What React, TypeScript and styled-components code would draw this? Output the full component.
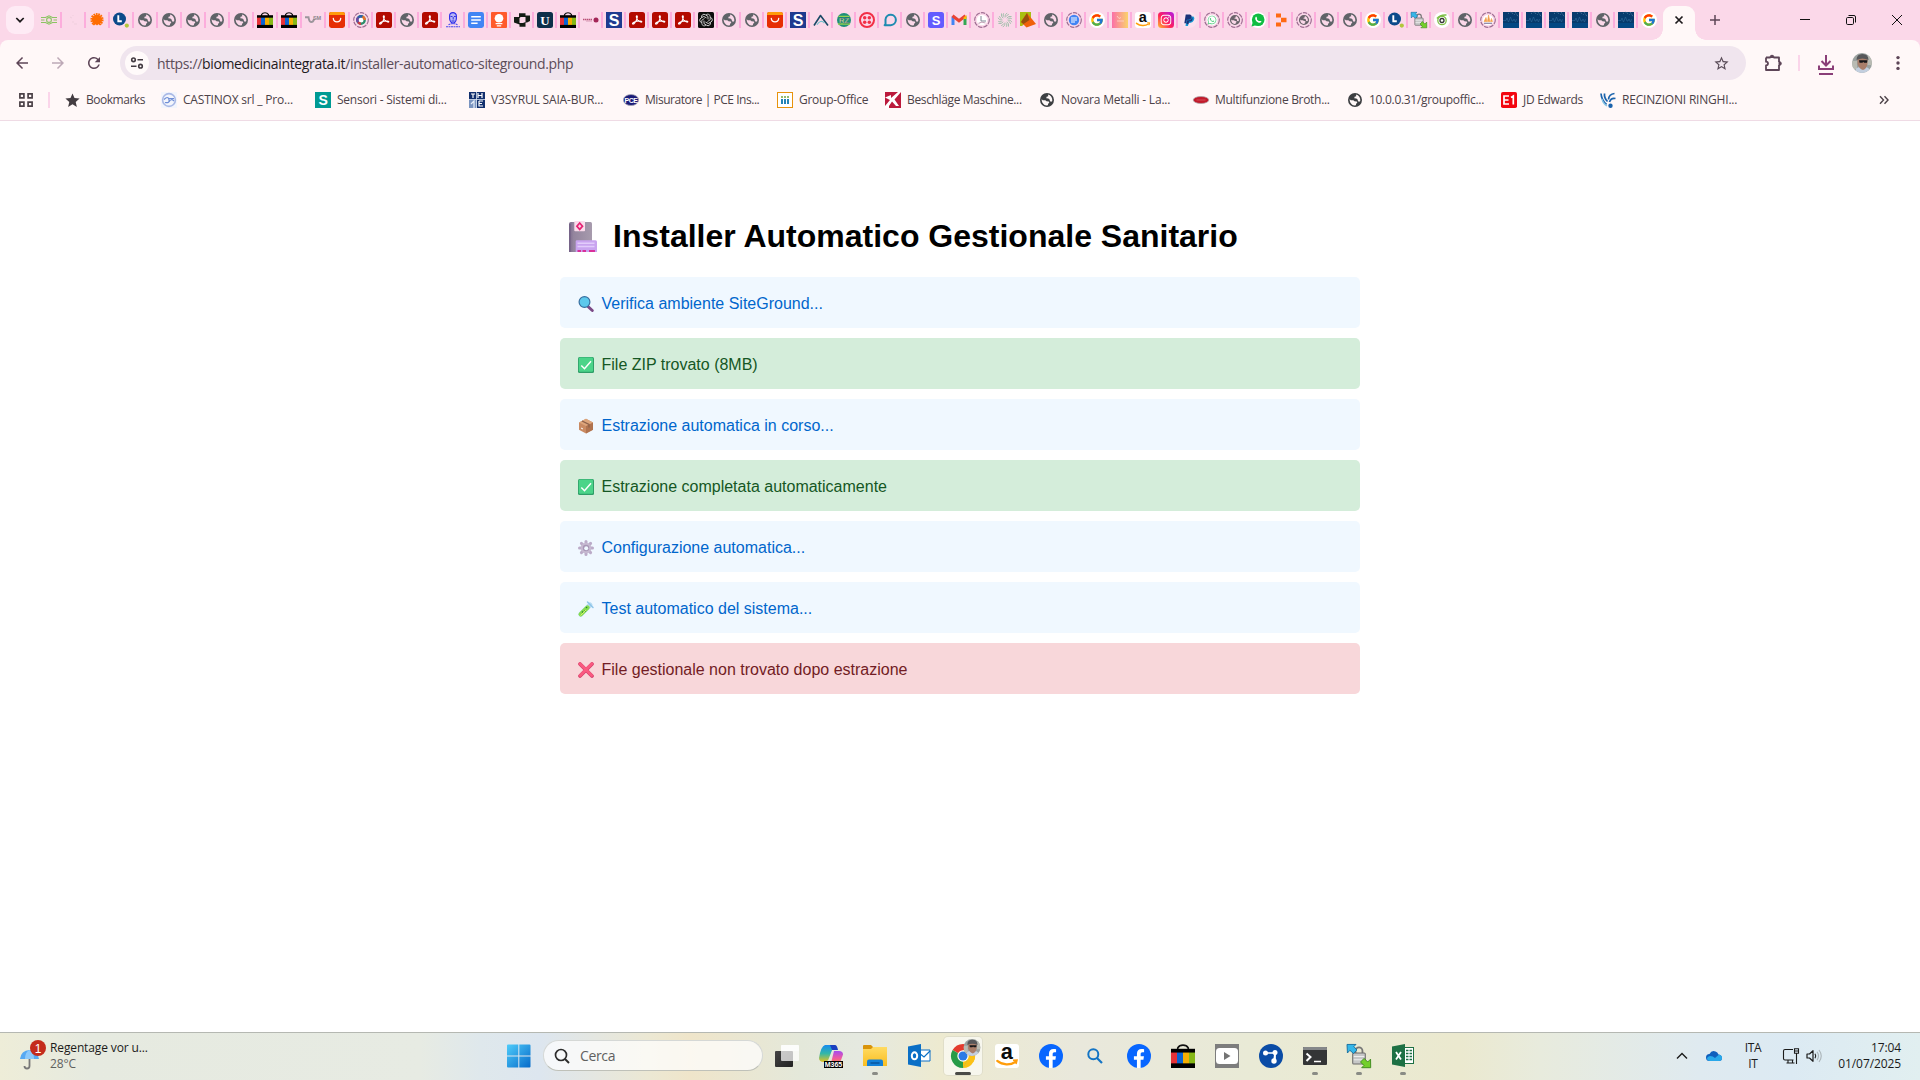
import React from "react";
import styled, { createGlobalStyle } from "styled-components";
import { FcGoogle } from "react-icons/fc";
import { FaFacebookF, FaInstagram, FaPaypal, FaWhatsapp } from "react-icons/fa";
import { MdArrowBack, MdArrowForward, MdRefresh, MdStar, MdStarBorder } from "react-icons/md";

const ui = '"Open Sans", "Noto Sans", sans-serif';

const Global = createGlobalStyle`
  * { box-sizing: border-box; }
  html, body { margin: 0; padding: 0; background: #fff; overflow: hidden; }
  svg { display: block; flex: none; overflow: visible; }
`;

const Screen = styled.div`
  width: 1920px;
  height: 1080px;
  display: flex;
  flex-direction: column;
  background: #fff;
  font-family: ${ui};
`;

/* ---------- browser chrome ---------- */

const TabStrip = styled.div`
  display: flex;
  height: 40px;
  background: #fbd8e9;
  padding-left: 6px;
`;

const TabSearch = styled.div`
  width: 28px;
  height: 28px;
  margin: 6px 4px 0 0;
  border-radius: 9px;
  background: #feebf5;
  display: flex;
  align-items: center;
  justify-content: center;
`;

const Tab = styled.div<{ $w: number; $last?: boolean }>`
  width: ${(p) => p.$w}px;
  height: 16px;
  margin-top: 12px;
  padding-left: 3px;
  border-right: ${(p) => (p.$last ? "0" : "2px solid #fcaddc")};
`;

const ActiveTab = styled.div`
  position: relative;
  width: 32px;
  height: 34px;
  margin: 6px 0 0 6px;
  border-radius: 9px 9px 0 0;
  background: #fff8f8;
  display: flex;
  align-items: center;
  justify-content: center;
  padding-bottom: 6px;
  &::before,
  &::after {
    content: "";
    position: absolute;
    bottom: 0;
    width: 11px;
    height: 11px;
  }
  &::before {
    right: 100%;
    background: radial-gradient(circle at 0 0, transparent 10.5px, #fff8f8 11px);
  }
  &::after {
    left: 100%;
    background: radial-gradient(circle at 100% 0, transparent 10.5px, #fff8f8 11px);
  }
`;

const NewTab = styled.div`
  margin: 14px 0 0 14px;
`;

const WindowButtons = styled.div`
  margin-left: auto;
  display: flex;
  height: 40px;
  align-items: center;
`;

const WindowButton = styled.div`
  width: 46px;
  display: flex;
  justify-content: center;
`;

const ToolbarBack = styled.div`
  background: #fbd8e9;
`;

const Toolbar = styled.div`
  height: 46px;
  background: #fff8f8;
  border-radius: 8px 8px 0 0;
  display: flex;
  align-items: center;
  padding: 0 16px 0 12px;
`;

const NavButton = styled.div<{ $color: string }>`
  width: 36px;
  height: 34px;
  display: flex;
  align-items: center;
  padding-left: 1px;
  color: ${(p) => p.$color};
`;

const Omnibox = styled.div`
  width: 1626px;
  height: 34px;
  border-radius: 17px;
  background: #f0e5ee;
  display: flex;
  align-items: center;
  padding: 0 16px 0 5px;
`;

const SiteInfo = styled.div`
  width: 24px;
  height: 24px;
  border-radius: 50%;
  background: #fffafa;
  display: flex;
  align-items: center;
  justify-content: center;
  margin-right: 8px;
`;

const Url = styled.div`
  flex: 1;
  font-size: 14px;
  letter-spacing: -0.345px;
  color: #5c4d59;
  white-space: nowrap;
  b {
    font-weight: 400;
    color: #1f1a1e;
  }
`;

const ToolbarRight = styled.div`
  display: flex;
  align-items: center;
  flex: 1;
  padding-left: 18px;
`;

const Divider = styled.div`
  width: 2px;
  height: 16px;
  background: #fbd5ea;
`;

const Bookmarks = styled.div`
  height: 35px;
  background: #fff8f8;
  border-bottom: 1px solid #efdbe5;
  display: flex;
  align-items: center;
  padding: 0 0 6px 18px;
`;

const BookmarkDivider = styled(Divider)`
  margin: 0 14px 0 14px;
`;

const Bookmark = styled.div<{ $w: number; $ls: number }>`
  width: ${(p) => p.$w}px;
  display: flex;
  align-items: center;
  gap: 6px;
  font-size: 12px;
  line-height: 16px;
  letter-spacing: ${(p) => p.$ls}px;
  color: #4c4248;
  white-space: nowrap;
`;

const More = styled.div`
  margin: 0 31px 0 auto;
`;

/* ---------- page ---------- */

const Page = styled.main`
  flex: 1;
  display: flex;
  flex-direction: column;
  align-items: center;
  padding-top: 92px;
  font-family: "Liberation Sans", Arial, sans-serif;
`;

const Container = styled.div`
  width: 800px;
`;

const Title = styled.h1`
  display: flex;
  align-items: center;
  height: 46px;
  margin: 0 0 18px;
  font-size: 32px;
  line-height: 46px;
  color: #000;
  white-space: nowrap;
`;

const TitleIcon = styled.span`
  width: 53px;
  padding-left: 6px;
`;

const StepList = styled.div`
  display: flex;
  flex-direction: column;
  gap: 10px;
`;

type Kind = "info" | "success" | "error";
const kinds = {
  info: ["#f0f8ff", "#0066cc"],
  success: ["#d4edda", "#155724"],
  error: ["#f8d7da", "#721c24"],
};

const Step = styled.div<{ $kind: Kind }>`
  height: 51px;
  display: flex;
  align-items: center;
  padding: 2px 15px 0 18px;
  border-radius: 5px;
  font-size: 16px;
  line-height: 21px;
  background: ${(p) => kinds[p.$kind][0]};
  color: ${(p) => kinds[p.$kind][1]};
`;

const StepIcon = styled.span`
  width: 23.5px;
`;

/* ---------- taskbar ---------- */

const Taskbar = styled.div`
  height: 48px;
  border-top: 1px solid #b5b8b2;
  display: flex;
  align-items: center;
  padding-bottom: 2px;
  background: linear-gradient(
    90deg,
    #eeedd8 0,
    #e6eae0 90px,
    #e7ebe3 420px,
    #dfe8ec 480px,
    #dde6ef 540px,
    #ece8d3 650px,
    #efe5ca 690px,
    #e4e8da 800px,
    #e5e9e0 860px,
    #edead0 940px,
    #e9e8dc 1080px,
    #e9ead6 1250px,
    #ebe9cf 1460px,
    #e8ebdd 1540px,
    #dfeaf0 1700px,
    #dceaf3 1790px,
    #e1eff0 1920px
  );
`;

const Widget = styled.div`
  width: 486px;
  display: flex;
  padding-left: 19px;
`;

const WidgetIcon = styled.div`
  width: 31px;
`;

const WidgetText = styled.div`
  font-size: 12px;
  line-height: 16px;
  letter-spacing: -0.13px;
  color: #1b1b1b;
  span {
    display: block;
    color: #5f615e;
  }
`;

const StartButton = styled.div`
  width: 57px;
  padding-left: 21px;
`;

const SearchBox = styled.div`
  width: 220px;
  height: 31px;
  border-radius: 16px;
  border: 1px solid #d5d8d6;
  border-bottom-color: #bfc1b9;
  background: rgba(255, 255, 255, 0.72);
  display: flex;
  align-items: center;
  gap: 10px;
  padding-left: 10px;
  font-size: 14px;
  letter-spacing: -0.35px;
  color: #606060;
`;

const Apps = styled.div`
  display: flex;
  margin-left: 2px;
`;

const AppButton = styled.div`
  width: 44px;
  height: 45px;
  display: flex;
  flex-direction: column;
  align-items: center;
  justify-content: center;
  position: relative;
`;

const AppPlate = styled.div<{ $active?: boolean }>`
  width: 38px;
  height: 38px;
  border-radius: 4px;
  display: flex;
  align-items: center;
  justify-content: center;
  background: ${(p) => (p.$active ? "rgba(255,255,255,0.6)" : "transparent")};
  box-shadow: ${(p) => (p.$active ? "0 0 0 1px rgba(200,200,185,0.35)" : "none")};
`;

const Running = styled.div<{ $active?: boolean }>`
  position: absolute;
  bottom: 3px;
  width: ${(p) => (p.$active ? 16 : 6)}px;
  height: 3px;
  border-radius: 2px;
  background: ${(p) => (p.$active ? "#4a4a46" : "#898b85")};
`;

const Tray = styled.div`
  margin-left: auto;
  display: flex;
  align-items: center;
  padding-right: 19px;
`;

const Language = styled.div`
  width: 36px;
  margin: 0 11px 0 13px;
  text-align: center;
  font-size: 12px;
  line-height: 16px;
  letter-spacing: -0.3px;
  color: #1b1b1b;
`;

const Clock = styled.div`
  width: 78px;
  text-align: right;
  font-size: 12px;
  line-height: 16px;
  letter-spacing: -0.1px;
  color: #1b1b1b;
  white-space: nowrap;
`;

const Gap = styled.div<{ $w: number }>`
  width: ${(p) => p.$w}px;
  flex: none;
`;

/* ---------- icons ---------- */

type P = { children?: React.ReactNode; s?: number; vb?: string };
const I = ({ children, s = 16, vb = "0 0 16 16" }: P) => (
  <svg width={s} height={s} viewBox={vb} fill="none">
    {children}
  </svg>
);

const globePath =
  "M8 1a7 7 0 1 1 0 14A7 7 0 0 1 8 1zM2.600 7.300C2.700 10.800 4.800 13.200 7.400 13.600L8.900 13.300 9.100 11.700 10.300 10.800 9.800 9.600 7.500 9.200 6.300 8.200 3.900 8.200zM8.900 2.600L9.300 4.300 7.600 4.800 7.300 6.200 9.400 6.400 10.800 7.700 10.900 9.300 12.300 9.800 13.300 8.900C13.600 5.900 11.900 3.300 8.900 2.600z";

const Globe = ({ c = "#5f6368" }: { c?: string }) => (
  <I>
    <path d={globePath} fill={c} fillRule="evenodd" />
  </I>
);

const Ring = ({ children }: P) => (
  <I>
    <circle cx="8" cy="8" r="7.3" stroke="#a06f94" strokeWidth="1.200" strokeDasharray="4.500 1" />
    {children}
  </I>
);

const Bag = ({ s = 16 }: { s?: number }) => (
  <I s={s}>
    <path d="M4.500 4V2.600Q5.600.7 8 .7t3.500 1.900V4" stroke="#111" strokeWidth="1.100" />
    <path d="M0 3.200h16V16H0z" fill="#000" />
    <path d="M0 5.700h4v7.200H0z" fill="#e53238" />
    <path d="M4 5.700h4v7.200H4z" fill="#0a64d2" />
    <path d="M8 5.700h4v7.200H8z" fill="#f5af02" />
    <path d="M12 5.700h4v7.200h-4z" fill="#86b817" />
  </I>
);

const Pdf = () => (
  <I>
    <rect width="16" height="16" rx="2.600" fill="#b30b00" />
    <path
      d="M3.600 11.900c-.7-.8 1.500-2.200 4.300-2.700 2.600-.5 5.100-.2 4.900.6-.3.900-2.700-.2-4.100-1.800C7.300 6.300 6.900 3.800 7.800 3.700c1-.1.500 2.600-.8 5.200-1.100 2.200-2.700 3.800-3.400 3z"
      stroke="#fff"
      strokeWidth="1.100"
    />
  </I>
);

const Ali = () => (
  <I>
    <rect width="16" height="16" rx="2.400" fill="#e62e04" />
    <path d="M0 3V2.400A2.400 2.400 0 0 1 2.400 0h11.200A2.400 2.400 0 0 1 16 2.400V3z" fill="#ff9b0b" />
    <path d="M4.300 6.500c.5 4.500 6.900 4.500 7.400 0" stroke="#fff" strokeWidth="1.300" strokeLinecap="round" />
  </I>
);

const Glyph = styled.text<{ $f?: string }>`
  font-family: ${(p) => p.$f || '"Liberation Sans", sans-serif'};
  font-weight: 700;
  text-anchor: middle;
`;

const Letter = ({ ch, bg, r = 0, size = 14, y = 13, f }: { ch: string; bg: string; r?: number; size?: number; y?: number; f?: string }) => (
  <I>
    <rect width="16" height="16" rx={r} fill={bg} />
    <Glyph x="8" y={y} fontSize={size} fill="#fff" $f={f}>
      {ch}
    </Glyph>
  </I>
);

const LDot = () => (
  <I>
    <circle cx="6.500" cy="7" r="6.500" fill="#0b4a8a" />
    <path d="M5.300 3.300v6h3.500" stroke="#fff" strokeWidth="1.900" />
    <circle cx="13.800" cy="13.600" r="2.100" fill="#b2c63a" />
  </I>
);

const Docs = () => (
  <I>
    <rect width="16" height="16" rx="2.400" fill="#4285f4" />
    <path d="M3.200 4.800h9.600M3.200 8h9.600M3.200 11.300h6.400" stroke="#fff" strokeWidth="1.400" />
  </I>
);

const Google = () => (
  <I>
    <circle cx="8" cy="8" r="8" fill="#fff" />
    <FcGoogle x={1} y={1} size={14} />
  </I>
);

const Wave = () => (
  <I>
    <rect width="16" height="16" fill="#063b6d" />
    <path d="M0 8.500h3l1-2.500 1.500 4 2-5 1.500 4h1l1-2 1.500 3 1-3" stroke="#2f6c9c" strokeWidth=".6" />
    <path d="M7.500 0l4 2.500M12 0l3.500 5M5 1l1.500 1" stroke="#6c93b0" strokeWidth=".8" strokeDasharray="1 1" />
    <path d="M0 11h16v5H0z" fill="#00569a" opacity=".5" />
  </I>
);

const WinScp = ({ s = 16 }: { s?: number }) => (
  <I s={s}>
    <path d="M5.700 6V4.500a2.300 2.300 0 0 1 4.600 0V6" stroke="#777" strokeWidth="1.200" />
    <rect x="3.800" y="6" width="8.400" height="7.300" rx=".7" fill="#c6c7c7" stroke="#6d6d6d" strokeWidth=".7" />
    <path d="M4.500 8.300h7M4.500 10.500h7" stroke="#eee" strokeWidth=".7" />
    <path d="M0 .3h6L4.600 1.700 6.600 4 4.300 6.300 1.900 4.200.3 6z" fill="#35b7e8" stroke="#126b9d" strokeWidth=".6" />
    <path d="M15.800 15.800H9.800l1.500-1.500L9 12l2.400-2.400 2.400 2.400 1.900-1.900z" fill="#73cf2a" stroke="#3a861a" strokeWidth=".6" />
  </I>
);

const AmazonIcon = ({ s = 16, r = 3 }: { s?: number; r?: number }) => (
  <I s={s}>
    <rect width="16" height="16" rx={r} fill="#fff" />
    <Glyph x="7.800" y="9.900" fontSize="14.500" fill="#0c0c0c">
      a
    </Glyph>
    <path d="M1.500 11.300c3.600 2.900 8.600 3 12 .7" stroke="#ff9d0a" strokeWidth="1.500" strokeLinecap="round" />
    <path d="M12 10.900l2.700-.2-.7 2.600" stroke="#ff9d0a" strokeWidth="1" />
  </I>
);

const favicons: Record<string, () => React.ReactElement> = {
  eco: () => (
    <I>
      <path d="M0 5.500h4.500L8 3.800l3.500 1.700H16M0 8h3.500M12.500 8H16M0 10.500h4.500L8 12.200l3.500-1.700H16" stroke="#8bc462" strokeWidth="1.100" />
      <circle cx="8" cy="8" r="2.400" stroke="#8bc462" strokeWidth="1.100" />
    </I>
  ),
  faint: () => (
    <I>
      <path d="M5 5l2 1M7 10h2M9 12h3M8 3v1" stroke="#efcfdd" strokeWidth="1" />
    </I>
  ),
  burst: () => (
    <I>
      <circle cx="8" cy="7.600" r="5.200" fill="#ff6d00" />
      <circle cx="8" cy="7.600" r="5.700" stroke="#ff6d00" strokeWidth="1.800" strokeDasharray="1.700 .8" />
      <path d="M2 12.300h12v3H2z" fill="#fbd8e9" />
      <path d="M3 12l2 1.400 1.500-1.400 1.500 1.600 1.500-1.600 1.500 1.400 2-1.400z" fill="#ff6d00" />
    </I>
  ),
  ldot: LDot,
  globe: () => <Globe />,
  bag: () => <Bag />,
  vsm: () => (
    <I>
      <path d="M0 5.300h3.500c.5 3 1 4.700 3 4.700 1.800 0 2.300-2 2.800-3.300" stroke="#9c959c" strokeWidth="2" />
      <Glyph x="12" y="8" fontSize="5.500" fill="#8c858c">
        SM
      </Glyph>
    </I>
  ),
  ali: Ali,
  wheel: () => (
    <Ring>
      <circle cx="8" cy="8" r="5.300" fill="#fff" />
      <circle cx="8" cy="8" r="3.700" stroke="#2e8b6a" strokeWidth="2.400" />
      <path d="M5.100 10.300A3.700 3.700 0 0 1 5.400 5.400" stroke="#6c4aa5" strokeWidth="2.400" />
      <path d="M5.400 5.400A3.700 3.700 0 0 1 9.500 4.600" stroke="#2d5fb0" strokeWidth="2.400" />
      <path d="M9.500 4.600A3.700 3.700 0 0 1 11.700 8" stroke="#e8702b" strokeWidth="2.400" />
      <path d="M5.100 10.300A3.700 3.700 0 0 0 8 11.700" stroke="#d23a44" strokeWidth="2.400" />
    </Ring>
  ),
  pdf: Pdf,
  face: () => (
    <I>
      <path d="M4.600 4c0-4.500 6.800-4.500 6.800 0 .3 4-1.200 6.800-3.400 7.300C5.800 10.800 4.300 8 4.600 4z" stroke="#2b2bea" strokeWidth="1.100" fill="#b7b4f5" />
      <path d="M5.500 4.500h2M9 4.500h1.800M8.200 5v2.500M6.500 9h3" stroke="#2424dd" strokeWidth=".9" />
      <path d="M3.500 12.700l2.500-1h4l2.500 1M1 14.800h14" stroke="#4a4aee" strokeWidth="1.100" strokeDasharray="2 .5" />
    </I>
  ),
  docs: Docs,
  bulb: () => (
    <I>
      <rect width="16" height="16" rx="1" fill="#ff5a2b" />
      <circle cx="8" cy="6.300" r="4.300" fill="#fff" />
      <path d="M4.600 11.600h6.800M5.800 13.800h4.400" stroke="#fff" strokeWidth="1.200" />
    </I>
  ),
  cross: () => (
    <I>
      <path d="M5 1.200h6.500v2.300H16v5.500l-3 1.500h-1.500v4.300H5.500v-2.300L0 10.500V5h5z" fill="#141c14" />
      <path d="M6.500 5h5v5l-2.500 1H5.500V6.500z" fill="#fbd8e9" />
    </I>
  ),
  u: () => <Letter ch="U" bg="#0d2f4a" r={2.500} size={13} y={12.600} f='"Liberation Serif", serif' />,
  redlogo: () => (
    <I>
      <path d="M0 7.500h9" stroke="#b84f76" strokeWidth="1.300" strokeDasharray="1.500 .5" />
      <path d="M3 9h6" stroke="#d18aa8" strokeWidth=".8" />
      <circle cx="13" cy="8" r="2.500" fill="#a32657" />
    </I>
  ),
  s: () => <Letter ch="S" bg="#1f3a8f" size={16} y={13.700} />,
  gpt: () => (
    <I>
      <rect width="16" height="16" rx="1.500" fill="#0d0d0d" />
      {[0, 60, 120, 180, 240, 300].map((a) => (
        <path key={a} d="M8 3a2.400 2.400 0 0 1 4.200 1.800v3L9.500 9.500" stroke="#fff" strokeWidth=".7" transform={`rotate(${a} 8 8)`} />
      ))}
    </I>
  ),
  a: () => (
    <I>
      <path d="M1 13.500L7.500 3.500 15 13.500" stroke="#1a4a66" strokeWidth="1.600" strokeLinejoin="round" />
      <path d="M4 12.800C6 9 9 8.500 11.500 11" stroke="#72c2cb" strokeWidth="1.200" />
    </I>
  ),
  rz: () => (
    <I>
      <circle cx="8" cy="8" r="7" fill="#1d8f78" />
      <path d="M2.500 4.300h11M2 12h12" stroke="#93d250" strokeWidth="1.300" />
      <Glyph x="8" y="10.700" fontSize="7.500" fill="#eaf3a0" stroke="#204a77" strokeWidth=".3">
        RZ
      </Glyph>
    </I>
  ),
  twilio: () => (
    <I>
      <circle cx="8" cy="8" r="7" stroke="#f22f46" strokeWidth="2" />
      {[5.700, 10.300].map((x) => [5.700, 10.300].map((y) => <circle key={`${x}${y}`} cx={x} cy={y} r="1.750" fill="#f22f46" />))}
    </I>
  ),
  p: () => (
    <I>
      <path d="M2.200 13.800L3.500 12V7.500a5.200 5.200 0 1 1 5.300 5.700H2.500" stroke="#1d8bb0" strokeWidth="2" />
    </I>
  ),
  stripe: () => <Letter ch="S" bg="#635bff" r={2.500} size={13} y={12.600} />,
  gmail: () => (
    <I>
      <path d="M2 13V4.500" stroke="#4285f4" strokeWidth="3" />
      <path d="M14 13V4.500" stroke="#34a853" strokeWidth="3" />
      <path d="M1.500 3.800L8 8.800l6.500-5" stroke="#ea4335" strokeWidth="3" />
      <path d="M12.500 5.400L15.500 3v4h-3z" fill="#fbbc04" />
    </I>
  ),
  chart: () => (
    <Ring>
      <circle cx="8" cy="8" r="5.300" fill="#fff" />
      <path d="M7 4v5h5" stroke="#7f8895" strokeWidth="1" />
      <path d="M4.500 11.500l3-1.500 4 1" stroke="#c4a5b9" strokeWidth="1.100" />
    </Ring>
  ),
  swirl: () => (
    <I>
      {[0, 45, 90, 135, 180, 225, 270, 315].map((a) => (
        <path key={a} d="M8 5.500Q7.500 2.500 10.200.9M9.300 4.500Q10 2.800 11.800 2.300" stroke="#7fb794" strokeWidth=".7" transform={`rotate(${a} 8 8)`} />
      ))}
    </I>
  ),
  prism: () => (
    <I>
      <path d="M0 0h11v6L2 14H0z" fill="#a9bf12" />
      <path d="M7 1l9 11-9.500 3.500L1 10z" fill="#f0610a" />
      <path d="M7 1l2.500 7L3.500 12 1 10z" fill="#98500d" />
    </I>
  ),
  ringdocs: () => (
    <Ring>
      <circle cx="8" cy="8" r="5.200" fill="#4285f4" />
      <path d="M5 6h6M5 8h6M5 10h4" stroke="#fff" strokeWidth="1" />
    </Ring>
  ),
  google: Google,
  pink: () => (
    <I>
      <defs>
        <linearGradient id="pk">
          <stop stopColor="#fb70a8" />
          <stop offset="1" stopColor="#fad36b" />
        </linearGradient>
      </defs>
      <rect width="16" height="16" fill="url(#pk)" />
      <path d="M5 4l2 2.500 2-1M5 9h7" stroke="#ffd5cf" strokeWidth=".8" />
    </I>
  ),
  amazon: () => <AmazonIcon />,
  insta: () => (
    <I>
      <defs>
        <linearGradient id="ig" x1="0" y1="1" x2="1" y2="0">
          <stop stopColor="#ffc12e" />
          <stop offset=".45" stopColor="#ff1f5b" />
          <stop offset="1" stopColor="#b01ae8" />
        </linearGradient>
      </defs>
      <rect width="16" height="16" rx="3.500" fill="url(#ig)" />
      <FaInstagram x={2} y={2} size={12} color="#fff" />
    </I>
  ),
  paypal: () => (
    <I>
      <circle cx="8" cy="8" r="8" fill="#fbe1ee" />
      <path d="M6 4.500h6.500q1.500 1 .5 3.500t-4 3H7.500L7 14H4.500z" fill="#179bd7" />
      <FaPaypal x={2} y={1.900} size={11} color="#1b3379" />
    </I>
  ),
  ringwa: () => (
    <Ring>
      <circle cx="8" cy="8" r="5.300" fill="#fff" />
      <FaWhatsapp x={3} y={3} size={10} color="#58cf84" />
    </Ring>
  ),
  ringglobe: () => (
    <Ring>
      <g transform="translate(2.200 2.200) scale(.725)">
        <path d={globePath} fill="#6a646b" fillRule="evenodd" />
      </g>
    </Ring>
  ),
  wa: () => (
    <I>
      <circle cx="8" cy="8" r="8" fill="#fff" />
      <circle cx="8.200" cy="7.800" r="6.300" fill="#0fbd42" />
      <path d="M1.500 14.500l1.300-4.500 3 3.300z" fill="#0fbd42" />
      <path d="M5.500 5.200c.8-1 1.300 0 1.600 1-.8 1.200 1.500 3.200 2.700 2.800 1-.3 2 .2 1.500 1C9.200 12.500 4 8.300 5.500 5.200z" fill="#fff" />
    </I>
  ),
  blocks: () => (
    <I>
      <path d="M3 1.500h5v4H3zM8 5.700h5.500v4.600H8zM3 10.500h5v4H3z" fill="#ff6a13" />
    </I>
  ),
  scp: () => <WinScp />,
  green: () => (
    <I>
      <circle cx="8" cy="8" r="8" fill="#fff" />
      <path d="M3 6.500Q6 2.500 12.500 3" stroke="#7ebf46" strokeWidth="1.500" />
      <circle cx="8" cy="8.500" r="4.200" stroke="#7ebf46" strokeWidth="1.300" />
      <circle cx="8" cy="8.500" r="2" stroke="#333" strokeWidth="1.300" />
    </I>
  ),
  sail: () => (
    <Ring>
      <circle cx="8" cy="8" r="5.300" fill="#fff" />
      <path d="M4 9.500l2-4 1 4zM7.500 9.500l1-6.500 1.500 6.500zM10.500 9.500l1-3 1 3z" fill="#f4a04b" stroke="#f4a04b" strokeWidth=".6" />
      <path d="M4 11.300h8" stroke="#8f89a8" strokeWidth="1.300" />
    </Ring>
  ),
  wave: Wave,
};

const wide = "eco faint burst ldot globe globe globe globe globe bag bag vsm ali wheel".split(" ");
const narrow = (
  "pdf globe pdf face docs bulb cross u bag redlogo s pdf pdf pdf gpt globe globe ali s a rz twilio p globe stripe gmail " +
  "chart swirl prism globe ringdocs google pink amazon insta paypal ringwa ringglobe wa blocks ringglobe globe globe google ldot scp green globe sail wave wave wave wave globe wave google"
).split(" ");

const Face = ({ s }: { s: number }) => (
  <I s={s} vb="0 0 20 20">
    <defs>
      <clipPath id={`face${s}`}>
        <circle cx="10" cy="10" r="10" />
      </clipPath>
    </defs>
    <g clipPath={`url(#face${s})`}>
      <rect width="20" height="20" fill="#9aa19f" />
      <path d="M0 8h5v8H0zM15 3h5v9h-5z" fill="#b9bbb3" />
      <path d="M3 20q0-6 5-6h5q5 0 5 6z" fill="#c3cfdf" />
      <path d="M5.500 6q5-4 10 0v5q-1 5-4.500 6-4-1-5.500-6z" fill="#a97e6a" />
      <path d="M4.500 7q0-6 6-6t6 6q-6-3-12 0z" fill="#57575a" />
      <path d="M7 7.300h8.500l-.5 2.400h-3l-.7-1-.8 1H7.500z" fill="#17171a" />
    </g>
  </I>
);

const bookmarks: [string, number, number, React.ReactElement][] = [
  ["Bookmarks", 97, -0.48, <MdStar size={17} color="#433c41" style={{ margin: "0 -1px 0 0" }} />],
  [
    "CASTINOX srl _ Pro...",
    154,
    -0.2,
    <I>
      <rect width="16" height="16" fill="#f3f5fc" />
      <circle cx="8" cy="8" r="6.400" stroke="#a9b9e6" strokeWidth="1.600" />
      <path d="M3 7.500q4-4 5 0t-4 3M8 6.500h5M8 10q2-4 5-1" stroke="#6f8ed6" strokeWidth="1.200" />
    </I>,
  ],
  ["Sensori - Sistemi di...", 154, -0.24, <Letter ch="S" bg="#009a93" size={14} />],
  [
    "V3SYRUL SAIA-BUR...",
    154,
    -0.16,
    <I>
      <rect width="16" height="16" fill="#12306e" />
      <path d="M2 2h4M4 2v4M9 1v5M13 1v5M9 3.500h4M10 9h4M10 9v5h4M10 11.500h3" stroke="#fff" strokeWidth="1.200" />
      <path d="M0 7.500h8V16H0z" fill="#7a94c0" />
      <path d="M7.500 0v16M0 7.500h16" stroke="#dbe4f3" strokeWidth=".8" />
      <path d="M2 12l3-3v7" stroke="#e8eef8" strokeWidth="1.200" />
    </I>,
  ],
  [
    "Misuratore | PCE Ins...",
    154,
    -0.46,
    <I>
      <ellipse cx="8" cy="8" rx="7.600" ry="5.500" fill="#1b1b78" stroke="#a5a5b4" strokeWidth=".8" />
      <Glyph x="8" y="10.700" fontSize="7" fill="#fff">
        PCE
      </Glyph>
    </I>,
  ],
  [
    "Group-Office",
    108,
    -0.26,
    <I>
      <rect x=".5" y=".5" width="15" height="15" fill="#fff" stroke="#e8920c" />
      <path d="M5 7v5M8 7v5M11 7v5" stroke="#2583b5" strokeWidth="2" />
      <path d="M4 5h2M7 5h2M10 5h2" stroke="#74a43c" strokeWidth="1.600" />
    </I>,
  ],
  [
    "Beschläge Maschine...",
    154,
    -0.36,
    <I>
      <rect width="16" height="16" fill="#bb1a3c" />
      <path d="M0 5.500L6 3v3L13 0h3L9.500 7.500 14 14h-3L7 9.500 4 14v2H0v-2l5-6z" fill="#fff" />
    </I>,
  ],
  ["Novara Metalli - La...", 154, -0.2, <Globe c="#3d3f42" />],
  [
    "Multifunzione Broth...",
    154,
    -0.3,
    <I>
      <ellipse cx="8" cy="8" rx="7.800" ry="3.500" fill="#c21a2b" stroke="#a9a4a8" strokeWidth=".7" />
      <path d="M3.500 8h9" stroke="#d8525f" strokeWidth=".9" />
    </I>,
  ],
  ["10.0.0.31/groupoffic...", 154, -0.3, <Globe c="#3d3f42" />],
  [
    "JD Edwards",
    99,
    -0.3,
    <I>
      <rect width="16" height="16" rx="1.800" fill="#f3060f" />
      <path d="M8 4H3v8h5M3 8h4.500M10 5.500L12.300 4v8.500" stroke="#fff" strokeWidth="1.700" />
    </I>,
  ],
  [
    "RECINZIONI RINGHI...",
    154,
    -0.2,
    <I>
      <path d="M1 1.500Q1.500 8 6.500 12.500M4.500 1.500Q4 6 7.500 9.500M14.500 1.500Q9 2 8.500 7.500M15.500 6.500Q11 5.500 9.500 10" stroke="#1b63ac" strokeWidth="1.700" />
      <circle cx="10.500" cy="13.700" r="2.200" fill="#1b63ac" />
      <path d="M2 7q1 4.500 5 7" stroke="#8ac5e4" strokeWidth="1.300" />
    </I>,
  ],
];

const FloppyBook = () => (
  <svg width="32" height="32" viewBox="0 0 32 32">
    <defs>
      <linearGradient id="bk">
        <stop stopColor="#7c6a8c" />
        <stop offset=".2" stopColor="#94859e" />
        <stop offset="1" stopColor="#a79bad" />
      </linearGradient>
    </defs>
    <path d="M5 2h19.500q1.500 0 1.500 1.500V32H3V4q0-2 2-2z" fill="url(#bk)" />
    <path d="M4 4v28" stroke="#6f5c82" />
    <rect x="8.300" y="1" width="10.700" height="10.300" rx=".8" fill="#fadcec" />
    <path d="M13.700 3L16.500 6.200l-2.800 3.200-2.800-3.200z" fill="#fbd0e2" stroke="#e62374" strokeWidth="1.700" />
    <path d="M11 20.300h18.500q1.500 0 1.500 1.500V32H9.700V21.500q0-1.200 1.300-1.200z" fill="#c9a4ef" />
    <path d="M11.500 23.200h17M11.500 26.500h17" stroke="#e2ccfb" strokeWidth="1.500" />
    <path d="M11.500 31h3.500M16.500 31h3.500M23 31h6" stroke="#d8309a" strokeWidth="2" />
  </svg>
);

const Lens = () => (
  <I>
    <path d="M10 10.500l4.300 4" stroke="#7b4a86" strokeWidth="3" strokeLinecap="round" />
    <circle cx="6.500" cy="6" r="5.400" fill="#5cc8ec" stroke="#386fa0" strokeWidth="1.200" />
  </I>
);
const Check = () => (
  <I>
    <rect width="16" height="16" rx="1.500" fill="#2f9e68" />
    <rect x=".8" y=".5" width="14.200" height="14.200" rx="1.200" fill="#4bd489" />
    <path d="M3.300 8.500L6.500 11.700 13 4.300" stroke="#fff" strokeWidth="1.500" />
  </I>
);
const Box = () => (
  <I>
    <path d="M1 4.500L8 .7 15 4.500v7.200L8 15.500l-7-3.800z" fill="#c98a62" />
    <path d="M8 7.500l7-3v7.200l-7 3.800z" fill="#b0734f" />
    <path d="M1 4.500L8 .7 15 4.500 8 8z" fill="#dda57b" />
    <path d="M4 3l7 3.500v3" stroke="#8c6049" strokeWidth="1.300" />
    <path d="M3 10l2 1" stroke="#fff" />
  </I>
);
const Gear = () => (
  <I>
    {[0, 45, 90, 135].map((a) => (
      <path key={a} d="M8 1.500v13" stroke="#bbabc8" strokeWidth="3" strokeLinecap="round" transform={`rotate(${a} 8 8)`} />
    ))}
    <circle cx="8" cy="8" r="5.200" fill="#c6b9d0" />
    <circle cx="8" cy="8" r="3.200" fill="#a796b6" />
    <circle cx="8.200" cy="8.200" r="2" fill="#f0f8ff" />
  </I>
);
const Tube = () => (
  <I>
    <path d="M12 4L2.800 13.200" stroke="#b7dcf2" strokeWidth="5" strokeLinecap="round" />
    <path d="M9.500 6.500L2.700 13.300" stroke="#86dc4e" strokeWidth="4.400" strokeLinecap="round" />
    <path d="M9.500 1l5.500 5.500" stroke="#8fc5ea" strokeWidth="1.500" strokeLinecap="round" />
    <path d="M4.500 11h.1M7 10h.1M8.500 6.500h.1" stroke="#238332" strokeWidth="1.500" strokeLinecap="round" />
    <path d="M2.500 14.500L8 9" stroke="#d7f06b" strokeWidth="1" />
  </I>
);
const Cross = () => (
  <I>
    <path d="M2 2l12 12M14 2L2 14" stroke="#d43f6b" strokeWidth="3.800" strokeLinecap="round" />
    <path d="M2 1.800l11.700 11.700M13.800 1.800L2.200 13.400" stroke="#fa5a80" strokeWidth="2.800" strokeLinecap="round" />
  </I>
);

const steps: [Kind, () => React.ReactElement, string][] = [
  ["info", Lens, "Verifica ambiente SiteGround..."],
  ["success", Check, "File ZIP trovato (8MB)"],
  ["info", Box, "Estrazione automatica in corso..."],
  ["success", Check, "Estrazione completata automaticamente"],
  ["info", Gear, "Configurazione automatica..."],
  ["info", Tube, "Test automatico del sistema..."],
  ["error", Cross, "File gestionale non trovato dopo estrazione"],
];

const Facebook = () => (
  <I s={24} vb="0 0 24 24">
    <circle cx="12" cy="12" r="12" fill="#0866ff" />
    <FaFacebookF x={2.500} y={5} size={19} color="#fff" />
  </I>
);

const apps: { icon: React.ReactElement; running?: boolean; active?: boolean }[] = [
  {
    icon: (
      <I s={24} vb="0 0 24 24">
        <defs>
          <linearGradient id="tv" x2="1" y2="1">
            <stop stopColor="#444" />
            <stop offset="1" stopColor="#222" />
          </linearGradient>
        </defs>
        <rect y="7" width="18" height="16" rx="1" fill="url(#tv)" />
        <rect x="6" y="1" width="18" height="16" rx="1" fill="#fff" opacity=".72" />
        <rect x="6" y="1" width="18" height="6" rx="1" fill="#fff" opacity=".6" />
      </I>
    ),
  },
  {
    icon: (
      <I s={24} vb="0 0 24 24">
        <defs>
          <linearGradient id="m1" x2="0" y2="1">
            <stop stopColor="#168bf0" />
            <stop offset=".5" stopColor="#33b7a8" />
            <stop offset="1" stopColor="#e5c220" />
          </linearGradient>
          <linearGradient id="m2" x2="0" y2="1">
            <stop stopColor="#a44cf0" />
            <stop offset=".6" stopColor="#f05aa0" />
            <stop offset="1" stopColor="#fb8b4d" />
          </linearGradient>
        </defs>
        <path d="M6 1h9l-5 13q-1 4-5 4-5 0-5-4Q2 2 6 1z" fill="url(#m1)" />
        <path d="M11 1h5q2 0 3 5h-6z" fill="#1a3fc0" />
        <path d="M15 7h5q4 0 4 3.500L21 19h-9z" fill="url(#m2)" />
        <rect x="5" y="17" width="19" height="7" fill="#000" />
        <Glyph x="14.500" y="23" fontSize="7" fill="#fff">
          M365
        </Glyph>
      </I>
    ),
  },
  {
    running: true,
    icon: (
      <I s={24} vb="0 0 24 24">
        <defs>
          <linearGradient id="fo" x2="0" y2="1">
            <stop stopColor="#ffdb62" />
            <stop offset="1" stopColor="#f9bd20" />
          </linearGradient>
        </defs>
        <path d="M0 2q0-1 1-1h7l2.500 2.500V7H0z" fill="#d9940a" />
        <path d="M0 5h8l2-2h14v19H0z" fill="url(#fo)" />
        <path d="M4 22v-4.500q0-2 2-2h12q2 0 2 2V22z" fill="#1380d8" />
        <path d="M8 19h8" stroke="#0a569e" strokeWidth="1.500" strokeLinecap="round" />
      </I>
    ),
  },
  {
    icon: (
      <I s={24} vb="0 0 24 24">
        <path d="M12 6h11v11H12z" fill="#fff" stroke="#0a6fc6" />
        <path d="M12 9l5 4 6-6" stroke="#0a6fc6" strokeWidth="1.200" />
        <path d="M1 2.500L14 0v23L1 20.500z" fill="#0a6fc6" />
        <ellipse cx="7.500" cy="11.800" rx="2.700" ry="3.500" stroke="#fff" strokeWidth="2" />
      </I>
    ),
  },
  {
    running: true,
    active: true,
    icon: (
      <I s={34} vb="0 0 34 34">
        <path d="M17 17L6.600 11A12 12 0 0 1 27.400 11H17z" fill="#e33b2e" />
        <path d="M17 17l10.400-6A12 12 0 0 1 17 29l5-9z" fill="#fbc116" />
        <path d="M17 17l5 3-5 9A12 12 0 0 1 6.600 11z" fill="#269b48" />
        <path d="M17 11h10.400a12 12 0 0 1 0 12L17 17z" fill="#fbc116" />
        <path d="M17 29L22.200 20H17z" fill="#fbc116" />
        <circle cx="17" cy="17" r="5.700" fill="#fff" />
        <circle cx="17" cy="17" r="4.500" fill="#2c7be5" />
        <svg x="17.500" y="0" width="17" height="17">
          <Face s={17} />
        </svg>
      </I>
    ),
  },
  { icon: <AmazonIcon s={24} r={2} /> },
  { icon: <Facebook /> },
  {
    icon: (
      <I s={24} vb="0 0 24 24">
        <circle cx="10.300" cy="10.200" r="5" stroke="#1474c4" strokeWidth="2" />
        <path d="M14 14l5 5" stroke="#1474c4" strokeWidth="2.200" />
      </I>
    ),
  },
  { icon: <Facebook /> },
  { icon: <Bag s={24} /> },
  {
    icon: (
      <I s={24} vb="0 0 24 24">
        <rect width="24" height="24" fill="#7d7d7d" />
        <rect x="1" y="4" width="22" height="16" rx="3.500" fill="#fff" />
        <path d="M9 8v8l6.500-4z" fill="#747474" />
      </I>
    ),
  },
  {
    icon: (
      <I s={24} vb="0 0 24 24">
        <circle cx="12" cy="12" r="12" fill="#0a4ca6" />
        <path d="M6 9h10v7" stroke="#fff" strokeWidth="1.700" />
        <path d="M16 9l-1 7" stroke="#fff" strokeWidth="1.500" />
        <circle cx="6.500" cy="9" r="2.500" fill="#fff" />
        <circle cx="16" cy="8.500" r="2.500" fill="#fff" />
        <circle cx="15" cy="17" r="2.700" fill="#fff" />
      </I>
    ),
  },
  {
    running: true,
    icon: (
      <I s={24} vb="0 0 24 24">
        <rect y="3" width="24" height="18" rx="1" fill="#343536" />
        <path d="M0 6V4q0-1 1-1h22q1 0 1 1v2z" fill="#85878a" />
        <path d="M3.500 9.500L7.500 13l-4 4" stroke="#fff" strokeWidth="2" />
        <path d="M11 17.500h7" stroke="#fff" strokeWidth="1.500" />
      </I>
    ),
  },
  { running: true, icon: <WinScp s={24} /> },
  {
    running: true,
    icon: (
      <I s={24} vb="0 0 24 24">
        <rect x="13" y="3.500" width="9.500" height="16" fill="#fff" stroke="#1d7044" />
        <path d="M15 6.500h2.500M18.500 6.500H21M15 9.500h2.500M18.500 9.500H21M15 12.500h2.500M18.500 12.500H21M15 15.500h2.500M18.500 15.500H21" stroke="#1d7044" strokeWidth="1.400" />
        <path d="M1 2.500L14 0v23L1 20.500z" fill="#1d7044" />
        <path d="M5 8l5 7.500M10 8l-5 7.500" stroke="#fff" strokeWidth="1.800" />
      </I>
    ),
  },
];

export default function App() {
  return (
    <Screen>
      <Global />
      <TabStrip>
        <TabSearch>
          <svg width="10" height="10" viewBox="0 0 10 10" fill="none">
            <path d="M1.300 3l3.700 3.700L8.700 3" stroke="#1d1a1c" strokeWidth="1.700" />
          </svg>
        </TabSearch>
        {wide.map((n, i) => {
          const F = favicons[n];
          return (
            <Tab key={i} $w={i === wide.length - 1 ? 23 : 24}>
              <F />
            </Tab>
          );
        })}
        {narrow.map((n, i) => {
          const F = favicons[n];
          const last = i === narrow.length - 1;
          return (
            <Tab key={i} $w={last ? 19 : 23} $last={last}>
              <F />
            </Tab>
          );
        })}
        <ActiveTab>
          <svg width="10" height="10" viewBox="0 0 10 10">
            <path d="M1.500 1.500l7 7M8.500 1.500l-7 7" stroke="#1d1a1c" strokeWidth="1.700" />
          </svg>
        </ActiveTab>
        <NewTab>
          <svg width="12" height="12" viewBox="0 0 12 12">
            <path d="M6 1v10M1 6h10" stroke="#5d4557" strokeWidth="1.500" />
          </svg>
        </NewTab>
        <WindowButtons>
          <WindowButton>
            <svg width="10" height="10" viewBox="0 0 10 10">
              <path d="M0 4.500h10" stroke="#111" />
            </svg>
          </WindowButton>
          <WindowButton>
            <svg width="10" height="10" viewBox="0 0 10 10" fill="none">
              <rect x=".5" y="2.500" width="7" height="7" rx="1.200" stroke="#111" />
              <path d="M2.500.5H8A1.500 1.500 0 0 1 9.500 2v5.500" stroke="#111" />
            </svg>
          </WindowButton>
          <WindowButton>
            <svg width="10" height="10" viewBox="0 0 10 10">
              <path d="M0 0l10 10M10 0L0 10" stroke="#111" />
            </svg>
          </WindowButton>
        </WindowButtons>
      </TabStrip>

      <ToolbarBack>
        <Toolbar>
          <NavButton $color="#5d4557">
            <MdArrowBack size={18} />
          </NavButton>
          <NavButton $color="#bda9b7">
            <MdArrowForward size={18} />
          </NavButton>
          <NavButton $color="#5d4557">
            <MdRefresh size={18} />
          </NavButton>
          <Omnibox>
            <SiteInfo>
              <svg width="14" height="12" viewBox="0 0 14 12" fill="none" stroke="#433b42" strokeWidth="1.600">
                <circle cx="3.500" cy="2.800" r="1.800" />
                <path d="M7.500 2.800H13M1 9.200h5.500" />
                <circle cx="10.500" cy="9.200" r="1.800" />
              </svg>
            </SiteInfo>
            <Url>
              https://<b>biomedicinaintegrata.it</b>/installer-automatico-siteground.php
            </Url>
            <MdStarBorder size={17} color="#5a4c58" />
          </Omnibox>
          <ToolbarRight>
            <svg width="18" height="18" viewBox="0 0 18 18" fill="none">
              <path d="M2 3.500h4.500M9.500 3.500H15V8M15 11v5H2v-4.500q2-.2 2-1.900T2 7.700V3.500" stroke="#5d4557" strokeWidth="1.800" strokeLinejoin="round" />
              <path d="M6 3.500q0-2.300 2-2.300t2 2.300zM15 7.500q2.300 0 2.300 2t-2.300 2z" fill="#5d4557" stroke="#5d4557" />
            </svg>
            <Gap $w={16} />
            <Divider />
            <Gap $w={17} />
            <svg width="18" height="20" viewBox="0 0 18 20" fill="none" stroke="#8a3f78" strokeWidth="2">
              <path d="M9 2v10M4.500 8L9 12.500 13.500 8M2 12.500V16h14v-3.500" />
              <path d="M2 21h14" />
            </svg>
            <Gap $w={17} />
            <Face s={20} />
            <Gap $w={24} />
            <svg width="4" height="16" viewBox="0 0 4 16" fill="#5d4557">
              <circle cx="2" cy="2.600" r="1.700" />
              <circle cx="2" cy="8" r="1.700" />
              <circle cx="2" cy="13.400" r="1.700" />
            </svg>
          </ToolbarRight>
        </Toolbar>
      </ToolbarBack>

      <Bookmarks>
        <svg width="16" height="16" viewBox="0 0 16 16" fill="none" stroke="#4c4248" strokeWidth="1.700">
          <path d="M1.900 1.900h4v4h-4zM10.100 1.900h4v4h-4zM1.900 10.100h4v4h-4zM10.100 10.100h4v4h-4z" />
        </svg>
        <BookmarkDivider />
        {bookmarks.map(([label, w, ls, icon]) => (
          <Bookmark key={label} $w={w} $ls={ls}>
            {icon}
            <span>{label}</span>
          </Bookmark>
        ))}
        <More>
          <svg width="10" height="10" viewBox="0 0 10 10" fill="none">
            <path d="M1 1.300L4.500 5 1 8.700M5.500 1.300L9 5 5.500 8.700" stroke="#4c4248" strokeWidth="1.400" />
          </svg>
        </More>
      </Bookmarks>

      <Page>
        <Container>
          <Title>
            <TitleIcon>
              <FloppyBook />
            </TitleIcon>
            Installer Automatico Gestionale Sanitario
          </Title>
          <StepList>
            {steps.map(([kind, Icon, text]) => (
              <Step key={text} $kind={kind}>
                <StepIcon>
                  <Icon />
                </StepIcon>
                {text}
              </Step>
            ))}
          </StepList>
        </Container>
      </Page>

      <Taskbar>
        <Widget>
          <WidgetIcon>
            <svg width="28" height="30" viewBox="0 0 28 30" fill="none">
              <path d="M10.500 18v8q0 2.500-2.500 2.500T5.500 26" stroke="#777" strokeWidth="1.800" />
              <path d="M1 19q1-8.500 9.500-9Q19 10.500 20 19z" fill="#57a9f2" />
              <path d="M6 19q0-7 4.500-9 4.500 2 4.500 9z" fill="#8cc9fb" />
              <circle cx="19" cy="8" r="8" fill="#c42b1c" />
              <Glyph x="19" y="12.500" fontSize="12" fill="#fff" style={{ fontWeight: 400 }}>
                1
              </Glyph>
            </svg>
          </WidgetIcon>
          <WidgetText>
            Regentage vor u...
            <span>28°C</span>
          </WidgetText>
        </Widget>
        <StartButton>
          <svg width="24" height="24" viewBox="0 0 24 24">
            <defs>
              <linearGradient id="win" x1="0" y1="0" x2="24" y2="24" gradientUnits="userSpaceOnUse">
                <stop stopColor="#4fcdfb" />
                <stop offset="1" stopColor="#0568c8" />
              </linearGradient>
            </defs>
            <path d="M0 1.500Q0 .5 1 .5h10.300v11H0zM12.300.5H22.500q1 0 1 1v10H12.300zM0 12.500h11.300v11H1q-1 0-1-1zM12.300 12.500h11.200v10q0 1-1 1H12.300z" fill="url(#win)" />
          </svg>
        </StartButton>
        <SearchBox>
          <svg width="16" height="16" viewBox="0 0 16 16" fill="none" stroke="#2c2c2c">
            <circle cx="7" cy="7" r="5.500" strokeWidth="1.700" />
            <path d="M11 11l4 4" strokeWidth="2" />
          </svg>
          Cerca
        </SearchBox>
        <Apps>
          {apps.map((a, i) => (
            <AppButton key={i}>
              <AppPlate $active={a.active}>{a.icon}</AppPlate>
              {a.running && <Running $active={a.active} />}
            </AppButton>
          ))}
        </Apps>
        <Tray>
          <svg width="12" height="8" viewBox="0 0 12 8" fill="none">
            <path d="M1 6.500l5-5 5 5" stroke="#1b1b1b" strokeWidth="1.400" />
          </svg>
          <Gap $w={18} />
          <svg width="16" height="12" viewBox="0 0 16 12">
            <path d="M3.500 11a3.500 3.500 0 0 1 0-7q2-4 6-2.500 2 .5 3 3Q16 5 16 8t-3 3z" fill="#0f5fbd" />
            <path d="M1 9q0-2.500 3-3 3 0 5 2l4-3.500Q16 5 16 8t-3 3H4Q1.500 11 1 9z" fill="#28a8ea" />
          </svg>
          <Language>
            ITA
            <br />
            IT
          </Language>
          <svg width="18" height="18" viewBox="0 0 18 18" fill="none" stroke="#1b1b1b" strokeWidth="1.100">
            <path d="M11 2.500H3Q1.500 2.500 1.500 4v7.500Q1.500 13 3 13h8.500M6 13v3M10.500 13v3M4.500 16h8" />
            <path d="M12.500 1.800h4v4.500h-4zM12.500 4h4M14.500 6.300V17" />
          </svg>
          <Gap $w={6} />
          <svg width="17" height="14" viewBox="0 0 17 14" fill="none">
            <path d="M1 5h2.500L7 1.700v10.600L3.500 9H1z" stroke="#1b1b1b" strokeWidth="1.200" strokeLinejoin="round" />
            <path d="M9 4.800q1.500 2.200 0 4.400" stroke="#1b1b1b" strokeWidth="1.100" />
            <path d="M11 2.800q3 4.200 0 8.400M13 1q4.500 6 0 12" stroke="#aab4b8" strokeWidth="1.100" />
          </svg>
          <Clock>
            17:04
            <br />
            01/07/2025
          </Clock>
        </Tray>
      </Taskbar>
    </Screen>
  );
}
